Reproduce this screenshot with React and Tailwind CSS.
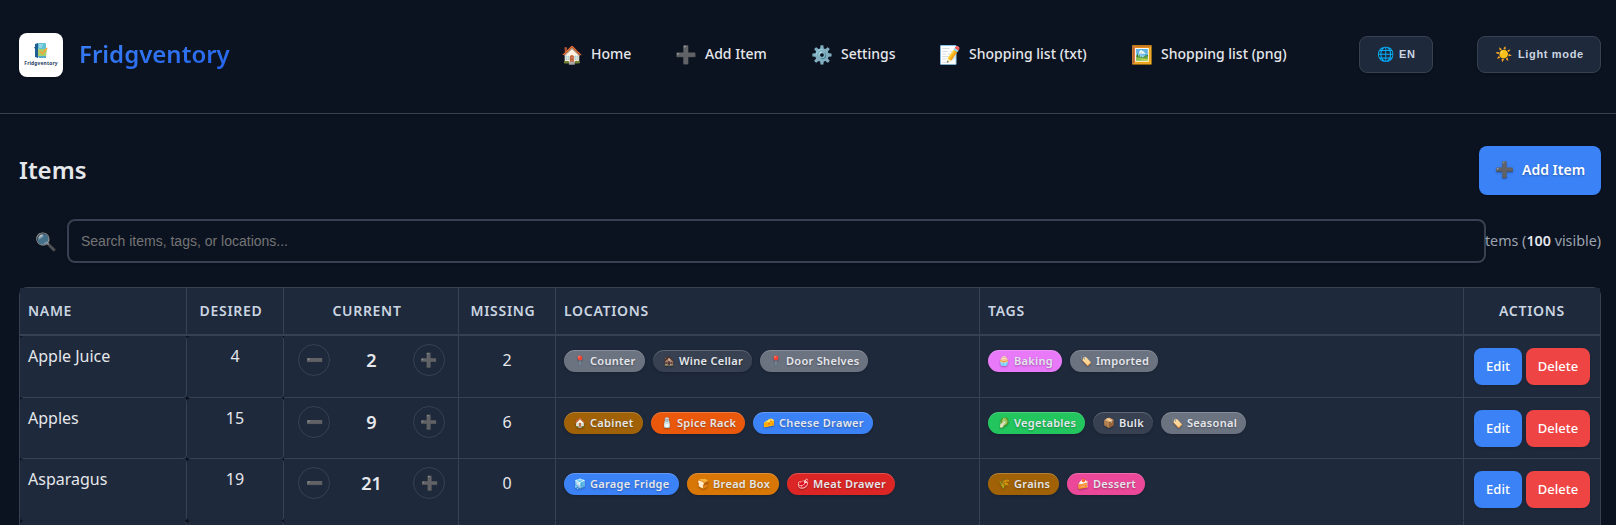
import React from "react";

const navItems = [
  { icon: "🏠", label: "Home", width: "w-[114px]" },
  { icon: "➕", label: "Add Item", width: "w-[136px]" },
  { icon: "⚙️", label: "Settings", width: "w-[128px]" },
  { icon: "📝", label: "Shopping list (txt)", width: "w-[192px]" },
  { icon: "🖼️", label: "Shopping list (png)", width: "w-[228px]" },
];

const rows = [
  {
    name: "Apple Juice", desired: 4, current: 2, missing: 2, height: "h-[62px]", line: "border-b-[#374151]",
    locations: [["📍", "Counter", "bg-[#6b7280]", "w-[81px]"], ["🏚️", "Wine Cellar", "bg-[#374151]", "w-[99px]"], ["📍", "Door Shelves", "bg-[#6b7280]", "w-[108px]"]],
    tags: [["🧁", "Baking", "bg-[#e879f9]", "w-[74px]"], ["🏷️", "Imported", "bg-[#6b7280]", "w-[88px]"]],
  },
  {
    name: "Apples", desired: 15, current: 9, missing: 6, height: "h-[61px]", line: "border-b-[#374151]",
    locations: [["🏠", "Cabinet", "bg-[#a16207]", "w-[79px]"], ["🧂", "Spice Rack", "bg-[#ea580c]", "w-[94px]"], ["🧀", "Cheese Drawer", "bg-[#3b82f6]", "w-[120px]"]],
    tags: [["🥬", "Vegetables", "bg-[#22c55e]", "w-[97px]"], ["📦", "Bulk", "bg-[#374151]", "w-[60px]"], ["🏷️", "Seasonal", "bg-[#6b7280]", "w-[85px]"]],
  },
  {
    name: "Asparagus", desired: 19, current: 21, missing: 0, height: "h-[62px]", line: "border-b-[#1d2738]",
    locations: [["🧊", "Garage Fridge", "bg-[#3b82f6]", "w-[115px]"], ["🍞", "Bread Box", "bg-[#d97706]", "w-[92px]"], ["🥩", "Meat Drawer", "bg-[#dc2626]", "w-[108px]"]],
    tags: [["🌾", "Grains", "bg-[#a16207]", "w-[71px]"], ["🍰", "Dessert", "bg-[#ec4899]", "w-[78px]"]],
  },
];

const columns = "grid grid-cols-[167px_97px_175px_97px_424px_484px_136px]";

function Logo() {
  return (
    <div className="flex h-11 w-11 flex-col items-center rounded-lg bg-white pt-[9px] shadow">
      <svg width="14" height="17" viewBox="0 0 14 17">
        <path d="M1 2 4 1v15l-3-1z" fill="#1f5f93" />
        <rect x="4" y="1" width="8" height="6" rx="1" fill="#63c1d6" />
        <path d="M5 3h4M5 5h3" stroke="#d9f3f7" strokeWidth=".8" />
        <path d="M4 7h9l-1 8H4z" fill="#a8cf6a" />
        <path d="m6 9 2.500 2.500L13 6" fill="none" stroke="#f2a63b" strokeWidth="1.600" />
        <path d="M4 14h8v2H5z" fill="#58aeca" />
        <path d="m0 6 2-1" stroke="#1f5f93" />
      </svg>
      <span className="mt-px text-[4.800px] leading-[6px] font-bold tracking-[0.200px] text-[#1e3a5f]">Fridgventory</span>
    </div>
  );
}

function Pill({ data }) {
  const [icon, label, color, width] = data;
  return (
    <span className={`flex h-[22px] shrink-0 items-center rounded-full pl-[10px] text-[11px] font-semibold tracking-[0.300px] whitespace-nowrap text-[#e5e7eb] shadow-[0_1px_3px_rgba(0,0,0,0.2),inset_0_1px_0_rgba(255,255,255,0.2)] [text-shadow:0_1px_2px_rgba(0,0,0,0.3)] ${color} ${width}`}>
      <span className="mr-1 flex w-3 justify-center pt-px text-[9.600px] tracking-normal">{icon}</span>
      {label}
    </span>
  );
}

function RoundButton({ children }) {
  return (
    <button className="flex h-8 w-8 items-center justify-center rounded-full border border-[#374151] text-[14px] leading-none">
      {children}
    </button>
  );
}

function Row({ row }) {
  const cell = `border-r border-b border-r-[#374151] bg-[#1e293b] ${row.line}`;
  return (
    <div className={`${columns} ${row.height}`}>
      <div className={`${cell} rounded pt-2 pl-2 text-base`}>{row.name}</div>
      <div className={`${cell} rounded pt-2 text-center text-base`}>{row.desired}</div>
      <div className={`${cell} flex items-start justify-between pt-2 pr-[13px] pl-[14px]`}>
        <RoundButton>➖</RoundButton>
        <span className="pt-[2px] text-lg leading-7 font-semibold">{row.current}</span>
        <RoundButton>➕</RoundButton>
      </div>
      <div className={`${cell} pt-3 text-center text-base`}>{row.missing}</div>
      <div className={`${cell} flex items-start gap-2 pt-[14px] pl-2`}>
        {row.locations.map((l) => <Pill key={l[1]} data={l} />)}
      </div>
      <div className={`${cell} flex items-start gap-2 pt-[14px] pl-2`}>
        {row.tags.map((t) => <Pill key={t[1]} data={t} />)}
      </div>
      <div className={`flex items-start gap-1 border-b bg-[#1e293b] pt-3 pl-[10px] text-[13px] font-medium text-white ${row.line}`}>
        <button className="h-[37px] w-12 rounded-lg bg-[#3b82f6] shadow">Edit</button>
        <button className="h-[37px] w-16 rounded-lg bg-[#ef4444] shadow">Delete</button>
      </div>
    </div>
  );
}

export default function App() {
  const th = "flex items-center border-r border-[#374151] pb-[2px]";
  return (
    <div className="h-[525px] overflow-hidden bg-[#0b1220] font-['Noto_Sans',sans-serif] text-[#e5e7eb]">
      <header className="flex h-[114px] items-center border-b border-[#374151] pr-[15px] pb-[3px] pl-[19px] shadow">
        <Logo />
        <span className="mb-[2px] ml-4 bg-linear-to-br from-[#3b82f6] to-[#2563eb] bg-clip-text text-2xl font-semibold text-transparent">Fridgventory</span>
        <nav className="ml-auto flex pb-[2px] text-sm font-medium">
          {navItems.map((n) => (
            <a key={n.label} className={`flex shrink-0 items-center whitespace-nowrap ${n.width}`}>
              <span className="mr-2 w-[22px] text-[17.600px] leading-6">{n.icon}</span>
              {n.label}
            </a>
          ))}
        </nav>
        <div className="flex gap-11 pb-px font-['Liberation_Sans',sans-serif] text-[11px] font-bold tracking-[0.650px] text-[#cbd5e1]">
          <button className="flex h-[37px] w-[74px] items-center rounded-lg border border-[#374151] bg-[#1e293b] pl-4 shadow">
            <span className="mr-[5px] w-[18px] text-[14px] tracking-normal">🌐</span>EN
          </button>
          <button className="flex h-[37px] w-[124px] items-center rounded-lg border border-[#374151] bg-[#1e293b] pl-4 whitespace-nowrap shadow">
            <span className="mr-[6px] w-[18px] text-[14px] tracking-normal">☀️</span>Light mode
          </button>
        </div>
      </header>
      <main className="pr-[15px] pl-[19px]">
        <div className="flex h-[105px] items-center justify-between pt-4 pb-2">
          <h1 className="pb-px text-2xl font-semibold">Items</h1>
          <button className="flex h-[49px] w-[122px] items-center rounded-lg bg-[#3b82f6] pb-[2px] pl-4 text-sm font-semibold text-white shadow [text-shadow:0_1px_2px_rgba(0,0,0,0.3)]">
            <span className="mr-2 w-[19px] text-[15.400px]">➕</span>Add Item
          </button>
        </div>
        <div className="flex h-11 items-center">
          <span className="w-12 pl-4 text-[17.600px] opacity-80">🔍</span>
          <input
            placeholder="Search items, tags, or locations..."
            className="h-11 w-[1419px] shrink-0 rounded-lg border-2 border-[#374151] bg-[#0b1220] px-3 font-['Liberation_Sans',sans-serif] text-sm shadow placeholder:text-[#757575]"
          />
          <div className="flex w-[115px] shrink-0 justify-end text-[14.300px] whitespace-pre text-[#9ca3af]">
            <span>tems (<b className="font-semibold text-[#e5e7eb]">100</b> visible)</span>
          </div>
        </div>
        <div className="mt-6 rounded-lg border border-[#374151]">
          <div className={`${columns} h-12 border-b-2 border-[#374151] bg-[#1e293b] text-[14px] font-semibold tracking-[0.700px] text-[#cbd5e1]`}>
            <div className={`${th} pl-2`}>NAME</div>
            <div className={`${th} justify-center pr-2`}>DESIRED</div>
            <div className={`${th} justify-center pr-2`}>CURRENT</div>
            <div className={`${th} justify-center pr-2`}>MISSING</div>
            <div className={`${th} pl-2`}>LOCATIONS</div>
            <div className={`${th} pl-2`}>TAGS</div>
            <div className="flex items-center justify-center pb-[2px]">ACTIONS</div>
          </div>
          {rows.map((row) => <Row key={row.name} row={row} />)}
          <div className={`${columns} h-16`}>
            <div className="rounded border-r border-[#374151] bg-[#1e293b]" />
            <div className="rounded border-r border-[#374151] bg-[#1e293b]" />
            <div className="border-r border-[#374151] bg-[#1e293b]" />
            <div className="border-r border-[#374151] bg-[#1e293b]" />
            <div className="border-r border-[#374151] bg-[#1e293b]" />
            <div className="border-r border-[#374151] bg-[#1e293b]" />
            <div className="bg-[#1e293b]" />
          </div>
        </div>
      </main>
    </div>
  );
}
